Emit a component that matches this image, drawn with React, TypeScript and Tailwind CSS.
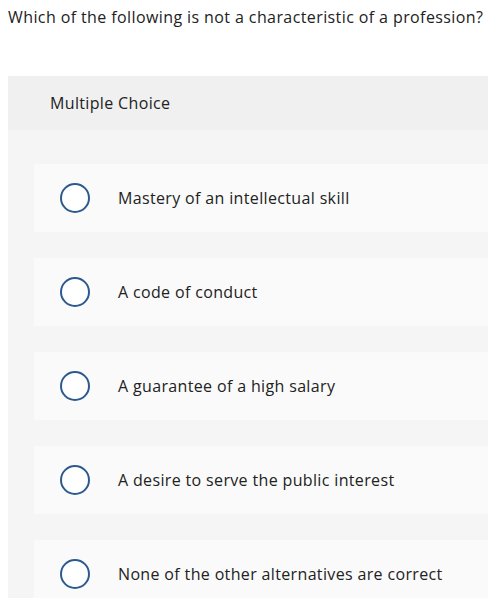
import React from "react";

const options = [
  "Mastery of an intellectual skill",
  "A code of conduct",
  "A guarantee of a high salary",
  "A desire to serve the public interest",
  "None of the other alternatives are correct",
];

export default function App() {
  return (
    <div
      className="w-[488px] h-[598px] overflow-hidden bg-white text-[#333333]"
      style={{ fontFamily: '"Open Sans", "Liberation Sans", sans-serif' }}
    >
      <div className="pl-[8px] pt-[5px] text-[16px] leading-[24px] tracking-[0.4px] whitespace-nowrap text-[#222222]">
        Which of the following is not a characteristic of a profession?
      </div>
      <div className="ml-[8px] mt-[47px] w-[520px]">
        <div className="h-[54px] bg-[#f0f0f0] pl-[42px] flex items-center text-[16px] tracking-[0.35px] text-[#222222]">
          Multiple Choice
        </div>
        <div className="bg-[#f5f5f5] pl-[26px] pt-[34px] pb-[40px] flex flex-col gap-[26px]">
          {options.map((o) => (
            <div
              key={o}
              className="h-[68px] bg-[#fafafa] flex items-center pl-[26px]"
            >
              <div className="w-[30px] h-[30px] rounded-full border-2 border-[#2d5a8e] bg-white shrink-0" />
              <div className="ml-[28px] text-[16px] tracking-[0.35px] text-[#222222] whitespace-nowrap">
                {o}
              </div>
            </div>
          ))}
        </div>
      </div>
    </div>
  );
}
